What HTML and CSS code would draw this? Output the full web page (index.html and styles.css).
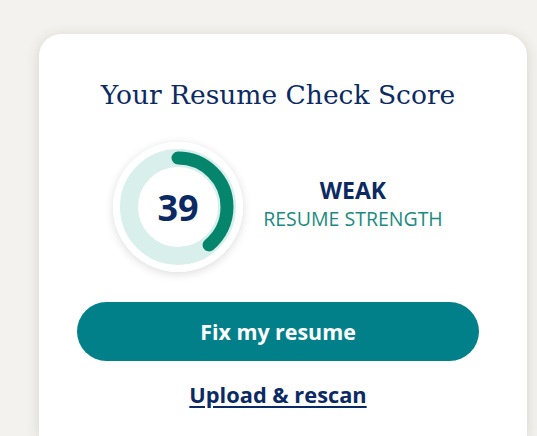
FILE: index.html
```html
<!DOCTYPE html>
<html>
<head>
<meta charset="utf-8">
<link rel="stylesheet" href="styles.css">
</head>
<body>
<div class="card">
  <h1 class="title">Your Resume Check Score</h1>
  <div class="score-row">
    <div class="gauge">
      <svg class="gauge-svg" width="130" height="130" viewBox="0 0 130 130">
        <circle cx="65" cy="65" r="65" fill="#ffffff"/>
        <circle cx="65" cy="65" r="49" fill="none" stroke="#d8efec" stroke-width="18"/>
        <circle cx="65" cy="65" r="49" fill="none" stroke="#04856c" stroke-width="13" stroke-linecap="round" stroke-dasharray="120.1 400" transform="rotate(-90 65 65)"/>
      </svg>
      <span class="gauge-num">39</span>
    </div>
    <div class="strength">
      <div class="strength-label">WEAK</div>
      <div class="strength-sub">RESUME STRENGTH</div>
    </div>
  </div>
  <button class="fix-btn">Fix my resume</button>
  <a class="rescan" href="#">Upload &amp; rescan</a>
</div>
</body>
</html>
```
FILE: styles.css
```css
html, body {
  margin: 0;
  padding: 0;
}
body {
  background: #f3f2ee;
  font-family: "Open Sans", Lato, sans-serif;
  height: 436px;
  overflow: hidden;
}
.card {
  margin: 34px 0 0 39px;
  width: 488px;
  height: 402px;
  box-sizing: border-box;
  background: #ffffff;
  border-radius: 22px 22px 0 0;
  box-shadow: 0 2px 14px rgba(60, 55, 40, 0.16);
  padding: 45px 48px 0 38px;
  display: flex;
  flex-direction: column;
  align-items: center;
}
.title {
  margin: 0;
  font-family: "DejaVu Serif", serif;
  font-weight: normal;
  font-size: 26.5px;
  line-height: 32px;
  color: #0b2a63;
  text-align: center;
}
.score-row {
  margin-top: 31px;
  display: flex;
  align-items: center;
  gap: 20px;
}
.gauge {
  position: relative;
  width: 130px;
  height: 130px;
  border-radius: 50%;
  box-shadow: 0 2px 10px rgba(0, 0, 0, 0.14);
}
.gauge-svg {
  display: block;
}
.gauge-num {
  position: absolute;
  inset: 0;
  display: flex;
  align-items: center;
  justify-content: center;
  font-weight: 700;
  font-size: 36px;
  color: #0b2a63;
}
.strength {
  width: 180px;
  margin-top: -7px;
  text-align: center;
}
.strength-label {
  font-weight: 700;
  font-size: 23px;
  line-height: 26px;
  color: #0b2a63;
}
.strength-sub {
  margin-top: 5px;
  font-size: 19.5px;
  line-height: 22px;
  color: #1c8a80;
  white-space: nowrap;
}
.fix-btn {
  margin-top: 30px;
  width: 402px;
  height: 59px;
  border: none;
  border-radius: 30px;
  background: #02808a;
  color: #ffffff;
  font-family: "Open Sans", Lato, sans-serif;
  font-weight: 700;
  font-size: 21.4px;
}
.rescan {
  margin-top: 20px;
  font-weight: 700;
  font-size: 21.8px;
  line-height: 28px;
  color: #0b2a63;
  text-decoration: underline;
  text-underline-offset: 3px;
  text-decoration-thickness: 2px;
}
```
